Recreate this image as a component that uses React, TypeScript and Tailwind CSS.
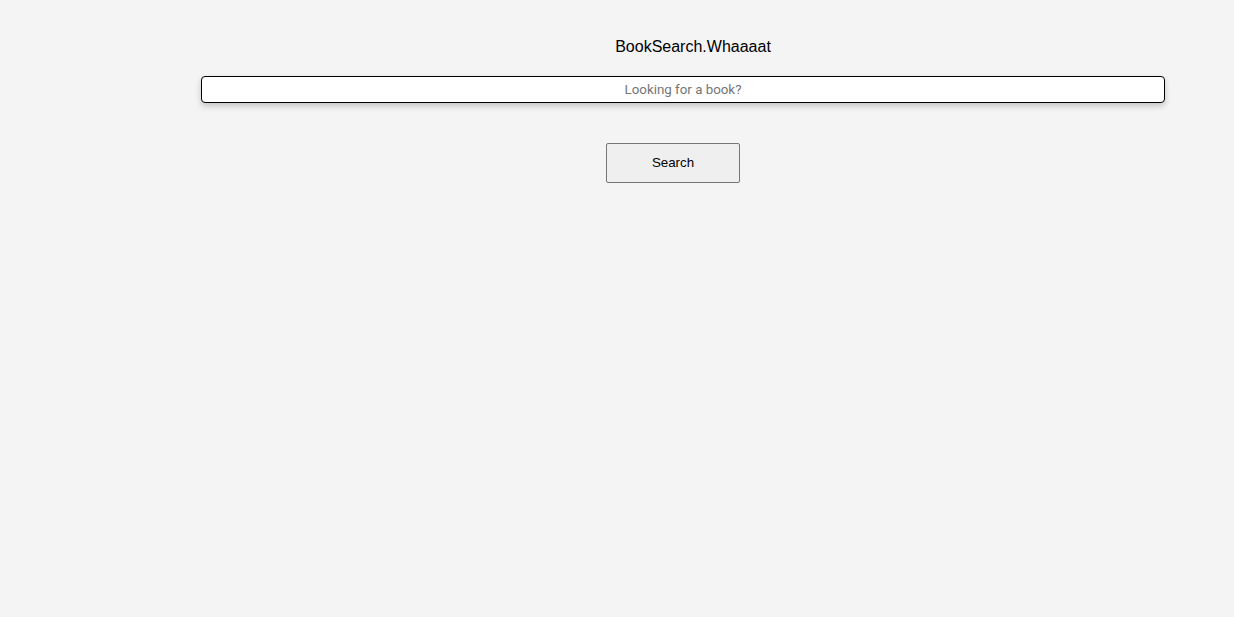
export default function App() {
  return (
    <div className="min-h-screen w-full bg-[#f4f4f4] font-['Liberation_Sans',Arial,sans-serif]">
      <div className="pt-[38px] pl-[152px] text-center text-[16px] leading-[18px] text-black">
        BookSearch.Whaaaat
      </div>
      <div className="mt-[20px] pl-[201px]">
        <input
          type="text"
          placeholder="Looking for a book?"
          className="block h-[27px] w-[964px] rounded-[4px] border border-black bg-white text-center font-['Roboto',sans-serif] text-[13.33px] text-black shadow-[0_3px_6px_rgba(0,0,0,0.2)] outline-none placeholder:text-[#757575]"
        />
      </div>
      <div className="mt-[40px] flex justify-center pl-[112px]">
        <button className="h-[40px] w-[134px] rounded-[2px] border border-[#767676] bg-[#efefef] text-[13.33px] text-black">
          Search
        </button>
      </div>
    </div>
  );
}
